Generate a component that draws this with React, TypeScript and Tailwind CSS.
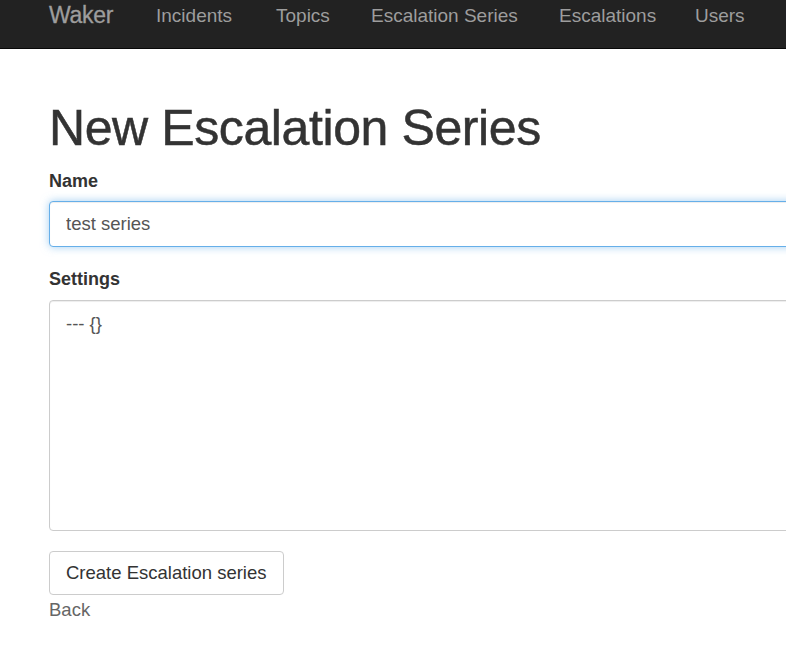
import React from "react";

const navItems: { label: string; w: string }[] = [
  { label: "Incidents", w: "w-[120px]" },
  { label: "Topics", w: "w-[95px]" },
  { label: "Escalation Series", w: "w-[188px]" },
  { label: "Escalations", w: "w-[136px]" },
  { label: "Users", w: "w-[90px]" },
  { label: "Logout", w: "w-[90px]" },
];

export default function App() {
  return (
    <div
      className="w-[786px] h-[660px] overflow-hidden bg-white"
      style={{ fontFamily: '"Liberation Sans", Arial, sans-serif' }}
    >
      <nav className="h-[49px] bg-[#222222] border-b border-[#080808] flex items-start pl-[49px] whitespace-nowrap overflow-hidden">
        <a className="text-[23px] leading-[24px] pt-[3px] text-[#9d9d9d] tracking-[-0.3px] w-[107px] shrink-0 [-webkit-text-stroke:0.3px_#9d9d9d]">
          Waker
        </a>
        {navItems.map((item) => (
          <a
            key={item.label}
            className={`${item.w} shrink-0 text-[19px] leading-[20px] pt-[6px] text-[#9d9d9d]`}
          >
            {item.label}
          </a>
        ))}
      </nav>

      <main className="pl-[49px]">
        <h1 className="mt-[52px] text-[50px] leading-[55px] text-[#333333] font-medium tracking-[-0.4px] [-webkit-text-stroke:0.5px_#333333] whitespace-nowrap">
          New Escalation Series
        </h1>

        <form className="w-[900px]">
          <label className="block mt-[15px] mb-[10px] text-[18px] leading-[20px] font-bold text-[#333333]">
            Name
          </label>
          <input
            type="text"
            defaultValue="test series"
            className="block w-full h-[46px] px-[16px] text-[18.5px] text-[#555555] bg-white border border-[#66afe9] rounded-[4px] outline-none shadow-[inset_0_1px_1px_rgba(0,0,0,0.075),0_0_8px_rgba(102,175,233,0.6)]"
            style={{ fontFamily: '"Liberation Sans", Arial, sans-serif' }}
          />

          <label className="block mt-[22px] mb-[11px] text-[18px] leading-[20px] font-bold text-[#333333]">
            Settings
          </label>
          <textarea
            defaultValue="--- {}"
            className="block w-full h-[231px] px-[16px] py-[11px] text-[18.5px] leading-[24px] text-[#555555] bg-white border border-[#cccccc] rounded-[4px] outline-none resize-none shadow-[inset_0_1px_1px_rgba(0,0,0,0.075)]"
            style={{ fontFamily: '"Liberation Sans", Arial, sans-serif' }}
          />

          <button
            type="button"
            className="mt-[20px] h-[44px] px-[16px] text-[18.5px] leading-[24px] text-[#333333] bg-white border border-[#cccccc] rounded-[4px]"
            style={{ fontFamily: '"Liberation Sans", Arial, sans-serif' }}
          >
            Create Escalation series
          </button>
        </form>

        <a className="block mt-[5px] text-[18.5px] leading-[20px] text-[#666666]">
          Back
        </a>
      </main>
    </div>
  );
}
